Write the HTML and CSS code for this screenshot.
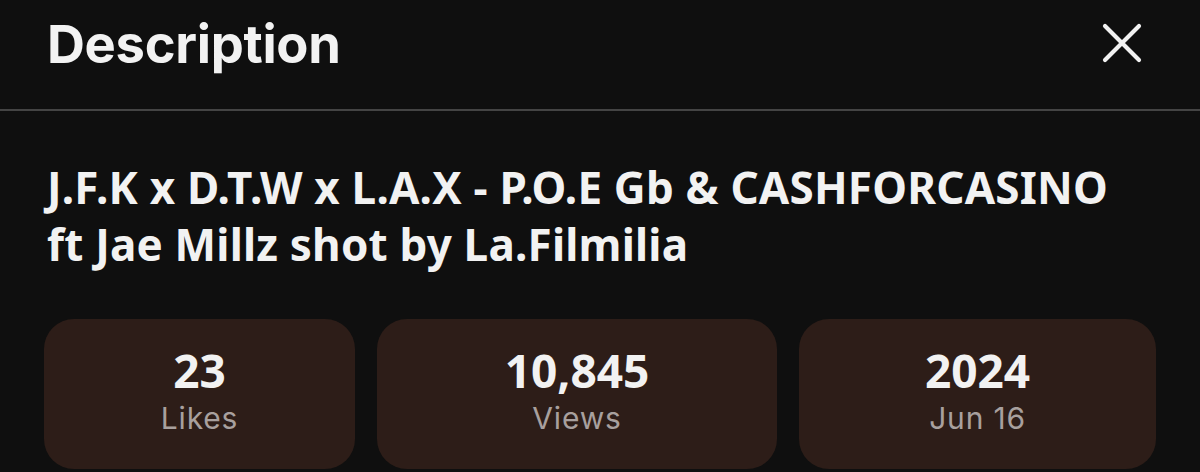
FILE: index.html
```html
<!DOCTYPE html>
<html>
<head>
<meta charset="utf-8">
<link rel="stylesheet" href="styles.css">
</head>
<body>
<div class="sheet">
  <header class="header">
    <h1 class="heading">Description</h1>
    <button class="close" aria-label="Close">
      <svg width="40" height="40" viewBox="0 0 40 40"><path d="M3 3 L37 37 M37 3 L3 37" stroke="#f2f2f2" stroke-width="4.2" stroke-linecap="round" fill="none"/></svg>
    </button>
  </header>
  <section class="body">
    <h2 class="title">J.F.K x D.T.W x L.A.X - P.O.E Gb &amp; CASHFORCASINO ft Jae Millz shot by La.Filmilia</h2>
    <div class="stats">
      <div class="stat s1"><div class="num">23</div><div class="label">Likes</div></div>
      <div class="stat s2"><div class="num">10,845</div><div class="label">Views</div></div>
      <div class="stat s3"><div class="num">2024</div><div class="label">Jun 16</div></div>
    </div>
  </section>
</div>
</body>
</html>
```
FILE: styles.css
```css
html, body {
  margin: 0;
  padding: 0;
  background: #0f0f0f;
  height: 472px;
  overflow: hidden;
}
.sheet {
  color: #f2f2f2;
}
.header {
  height: 109px;
  border-bottom: 2px solid #444444;
  display: flex;
  align-items: flex-start;
  justify-content: space-between;
  padding: 0 58px 0 47px;
}
.heading {
  margin: 0;
  font-family: Inter, "Liberation Sans", sans-serif;
  font-weight: 700;
  font-size: 52.5px;
  line-height: 1;
  padding-top: 18px;
  letter-spacing: -0.3px;
}
.close {
  background: none;
  border: 0;
  padding: 0;
  margin-top: 23px;
  width: 40px;
  height: 40px;
  display: flex;
}
.body {
  padding: 0 44px 0 47px;
}
.title {
  margin: 0;
  max-width: 1100px;
  padding-top: 48px;
  font-family: "Noto Sans", sans-serif;
  font-weight: 700;
  font-size: 44px;
  line-height: 57px;
  letter-spacing: 0.2px;
}
.stats {
  display: grid;
  grid-template-columns: 311px 400px 357px;
  column-gap: 22px;
  margin-top: 46px;
  margin-left: -3px;
}
.stat {
  height: 150px;
  background: #2d1d18;
  border-radius: 30px;
  display: flex;
  flex-direction: column;
  align-items: center;
  padding-top: 23px;
  box-sizing: border-box;
}
.num {
  font-family: "Noto Sans", sans-serif;
  font-weight: 700;
  font-size: 46px;
  line-height: 56px;
}
.label {
  font-family: Inter, "Liberation Sans", sans-serif;
  font-size: 30px;
  letter-spacing: 0.8px;
  line-height: 36px;
  margin-top: 2px;
  color: #a8a09e;
}
```
